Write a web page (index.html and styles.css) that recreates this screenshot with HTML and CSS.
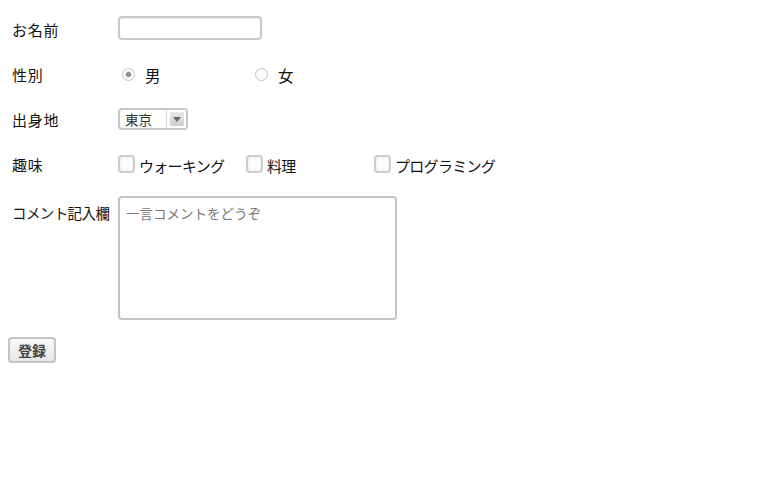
FILE: index.html
```html
<!DOCTYPE html>
<html lang="ja">
<head>
<meta charset="utf-8">
<title>フォーム</title>
<link rel="stylesheet" href="styles.css">
</head>
<body>
<form class="form">
  <div class="row">
    <label class="lbl" for="name">お名前</label>
    <input class="text" id="name" type="text">
  </div>
  <div class="row">
    <span class="lbl">性別</span>
    <div class="opts">
      <label class="opt radio-opt r1"><input class="radio" type="radio" name="sex" checked><span>男</span></label>
      <label class="opt radio-opt"><input class="radio" type="radio" name="sex"><span>女</span></label>
    </div>
  </div>
  <div class="row">
    <label class="lbl" for="pref">出身地</label>
    <span class="select-wrap">
      <select id="pref" class="select"><option>東京</option></select>
      <span class="arrow"></span>
    </span>
  </div>
  <div class="row">
    <span class="lbl">趣味</span>
    <div class="opts">
      <label class="opt check-opt"><input class="check" type="checkbox"><span>ウォーキング</span></label>
      <label class="opt check-opt"><input class="check" type="checkbox"><span>料理</span></label>
      <label class="opt check-opt"><input class="check" type="checkbox"><span>プログラミング</span></label>
    </div>
  </div>
  <div class="row row-top">
    <label class="lbl lbl-top" for="comment">コメント記入欄</label>
    <textarea class="area" id="comment" placeholder="一言コメントをどうぞ"></textarea>
  </div>
  <div class="actions">
    <button class="btn" type="button">登録</button>
  </div>
</form>
</body>
</html>
```

FILE: styles.css
```css
html, body {
  margin: 0;
  padding: 0;
  background: #fff;
}
body {
  font-family: "Noto Sans CJK JP", "Noto Sans", sans-serif;
  font-size: 14px;
  color: #111;
}
.form {
  padding: 16px 0 0 8px;
  display: flex;
  flex-direction: column;
  gap: 21px;
}
.row {
  display: flex;
  align-items: center;
  height: 24px;
}
.row-top {
  align-items: flex-start;
  height: auto;
}
.lbl {
  width: 110px;
  padding-left: 4px;
  padding-top: 4px;
  box-sizing: border-box;
  font-size: 15px;
  line-height: 20px;
  white-space: nowrap;
  letter-spacing: 0.8px;
}
.lbl-top {
  padding-top: 7px;
  letter-spacing: -0.6px;
  font-size: 14.5px;
}
.text {
  width: 144px;
  height: 24px;
  box-sizing: border-box;
  border: 2px solid #c9c9c9;
  border-radius: 4px;
  margin: 0;
  padding: 0 4px;
  font: inherit;
  box-shadow: inset 0 1px 1px #eee;
}
.opts {
  display: flex;
  align-items: center;
}
.opt {
  display: flex;
  align-items: center;
}
.radio-opt {
  width: 133px;
  padding-left: 4px;
  box-sizing: border-box;
  gap: 10px;
  font-size: 15.5px;
  padding-top: 2px;
}
.radio-opt span {
  padding-top: 2px;
}
.radio {
  appearance: none;
  -webkit-appearance: none;
  width: 13px;
  height: 13px;
  margin: 0;
  border: 1.5px solid #c4c4c4;
  border-radius: 50%;
  box-sizing: border-box;
  background: #fafafa;
  position: relative;
}
.radio:checked {
  background: radial-gradient(circle, #8e8e8e 0 2.2px, #e4e4e4 2.6px 3px, #fafafa 3.4px);
}
.check-opt {
  width: 128px;
  font-size: 15px;
  gap: 4px;
  padding-top: 2px;
}
.check-opt span {
  padding-top: 3px;
  letter-spacing: -0.7px;
}
.check {
  appearance: none;
  -webkit-appearance: none;
  width: 17px;
  height: 18px;
  margin: 0;
  border: 2px solid #cdcdcd;
  border-radius: 4px;
  box-sizing: border-box;
  background: #fcfcfc;
  box-shadow: inset 0 0 2px #e0e0e0;
}
.select-wrap {
  position: relative;
  display: inline-block;
  width: 70px;
  height: 22px;
  margin-top: 2px;
}
.select {
  appearance: none;
  -webkit-appearance: none;
  width: 70px;
  height: 22px;
  box-sizing: border-box;
  margin: 0;
  border: 2px solid #c6c6c6;
  border-radius: 4px;
  background: #fff;
  padding: 0 0 0 5px;
  font-family: inherit;
  font-size: 13.5px;
  color: #333;
  line-height: 18px;
}
.arrow {
  position: absolute;
  top: 2px;
  right: 2px;
  width: 19px;
  height: 18px;
  border-left: 1px solid #d4d4d4;
  background: #fff;
  pointer-events: none;
}
.arrow::before {
  content: "";
  position: absolute;
  left: 3px;
  top: 2px;
  width: 14px;
  height: 14px;
  background: linear-gradient(#e8e8e8, #cfcfcf);
  border-radius: 1px;
}
.arrow::after {
  content: "";
  position: absolute;
  left: 6px;
  top: 7px;
  border-left: 4px solid transparent;
  border-right: 4px solid transparent;
  border-top: 5px solid #666;
}
.area {
  width: 279px;
  height: 124px;
  box-sizing: border-box;
  margin: 0;
  border: 2px solid #c4c4c4;
  border-radius: 4px;
  padding: 5px 6px;
  font-family: inherit;
  font-size: 13.5px;
  resize: none;
}
.area::placeholder {
  color: #777;
}
.actions {
  margin-top: -4px;
}
.btn {
  margin: 0;
  width: 48px;
  height: 26px;
  border: 2px solid #c4c4c4;
  border-radius: 4px;
  background: linear-gradient(#fafafa, #e6e6e6);
  font-family: inherit;
  font-size: 14px;
  font-weight: bold;
  color: #444;
  padding: 0;
  line-height: 20px;
}
```
